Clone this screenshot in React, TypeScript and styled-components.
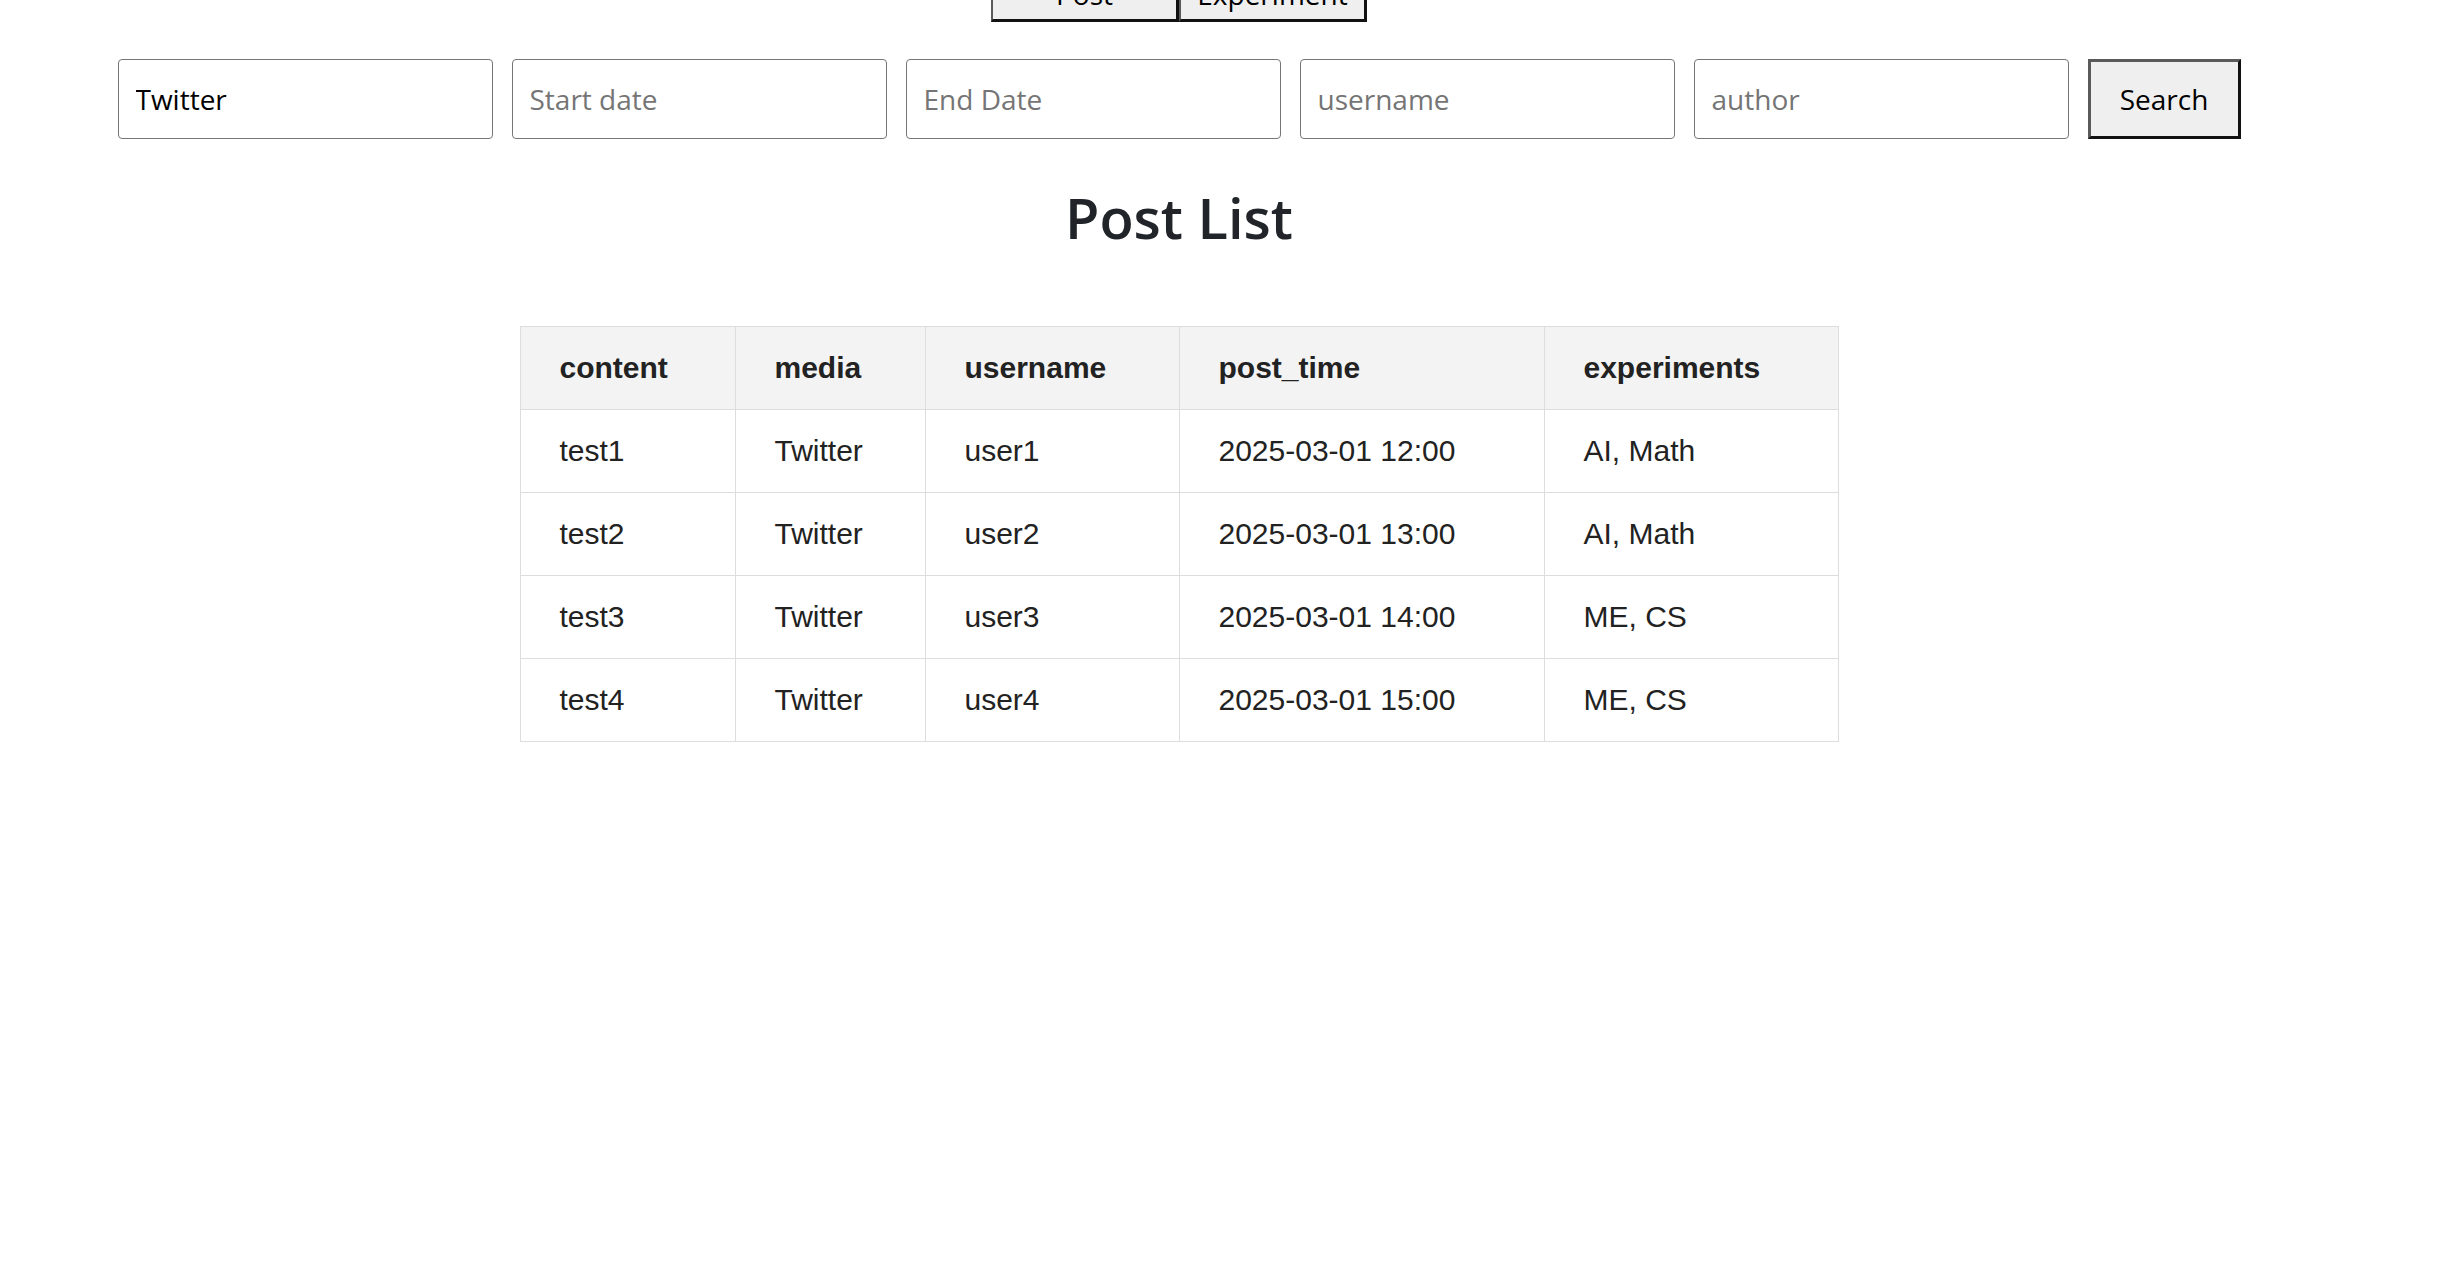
import React from "react";
import styled, { createGlobalStyle } from "styled-components";

const GlobalStyle = createGlobalStyle`
  html, body {
    margin: 0;
    padding: 0;
    background: #ffffff;
  }
  body {
    font-family: "Open Sans", "Noto Sans", sans-serif;
    overflow: hidden;
  }
`;

const Page = styled.div`
  width: 2358px;
  margin-top: -34px;
  display: flex;
  flex-direction: column;
  align-items: center;
`;

const Nav = styled.nav`
  display: flex;
  justify-content: center;
`;

const NavButton = styled.button`
  width: 188px;
  height: 56px;
  padding: 6px 0;
  font-family: "Open Sans", sans-serif;
  font-size: 28px;
  line-height: 38px;
  color: #000;
  background: #efefef;
  border-style: solid;
  border-width: 2px 3px 3px 2px;
  border-color: #5a5a5a #111 #111 #5a5a5a;
  box-sizing: border-box;
  cursor: pointer;
`;

const SearchBar = styled.div`
  display: flex;
  gap: 19px;
  margin-top: 37px;
`;

const Field = styled.input`
  box-sizing: border-box;
  width: 375px;
  height: 80px;
  padding: 0 17px;
  border: 1px solid #767676;
  border-radius: 4px;
  font-family: "Open Sans", sans-serif;
  font-size: 28px;
  color: #000;
  background: #fff;
  outline: none;
  &::placeholder {
    color: #757575;
  }
`;

const SearchButton = styled.button`
  box-sizing: border-box;
  width: 153px;
  height: 80px;
  font-family: "Open Sans", sans-serif;
  font-size: 28px;
  color: #000;
  background: #efefef;
  border-style: solid;
  border-width: 3px;
  border-color: #5a5a5a #111 #111 #5a5a5a;
  cursor: pointer;
`;

const Title = styled.h1`
  margin: 40px 0 0;
  font-family: "Open Sans", sans-serif;
  font-size: 56px;
  font-weight: 600;
  color: #212529;
  line-height: normal;
`;

const Table = styled.table`
  margin-top: 71px;
  border-collapse: collapse;
  table-layout: fixed;
  width: 1318px;
  font-family: "Liberation Sans", Arial, sans-serif;
  font-size: 30px;
  color: #222;
`;

const HeadCell = styled.th<{ $w: number }>`
  width: ${(p) => p.$w - 79}px;
  background: #f3f3f3;
  border: 1px solid #dddddd;
  padding: 24px 39px;
  text-align: left;
  font-weight: bold;
  line-height: normal;
`;

const Cell = styled.td`
  border: 1px solid #dddddd;
  padding: 24px 39px;
  text-align: left;
  line-height: normal;
  white-space: nowrap;
`;

const columns = [
  { key: "content", w: 215 },
  { key: "media", w: 190 },
  { key: "username", w: 254 },
  { key: "post_time", w: 365 },
  { key: "experiments", w: 294 },
];

const rows = [
  { content: "test1", media: "Twitter", username: "user1", post_time: "2025-03-01 12:00", experiments: "AI, Math" },
  { content: "test2", media: "Twitter", username: "user2", post_time: "2025-03-01 13:00", experiments: "AI, Math" },
  { content: "test3", media: "Twitter", username: "user3", post_time: "2025-03-01 14:00", experiments: "ME, CS" },
  { content: "test4", media: "Twitter", username: "user4", post_time: "2025-03-01 15:00", experiments: "ME, CS" },
];

export default function App() {
  return (
    <>
      <GlobalStyle />
      <Page>
        <Nav>
          <NavButton>Post</NavButton>
          <NavButton>Experiment</NavButton>
        </Nav>
        <SearchBar>
          <Field defaultValue="Twitter" />
          <Field placeholder="Start date" />
          <Field placeholder="End Date" />
          <Field placeholder="username" />
          <Field placeholder="author" />
          <SearchButton>Search</SearchButton>
        </SearchBar>
        <Title>Post List</Title>
        <Table>
          <thead>
            <tr>
              {columns.map((c) => (
                <HeadCell key={c.key} $w={c.w}>
                  {c.key}
                </HeadCell>
              ))}
            </tr>
          </thead>
          <tbody>
            {rows.map((r) => (
              <tr key={r.content}>
                {columns.map((c) => (
                  <Cell key={c.key}>{(r as Record<string, string>)[c.key]}</Cell>
                ))}
              </tr>
            ))}
          </tbody>
        </Table>
      </Page>
    </>
  );
}
